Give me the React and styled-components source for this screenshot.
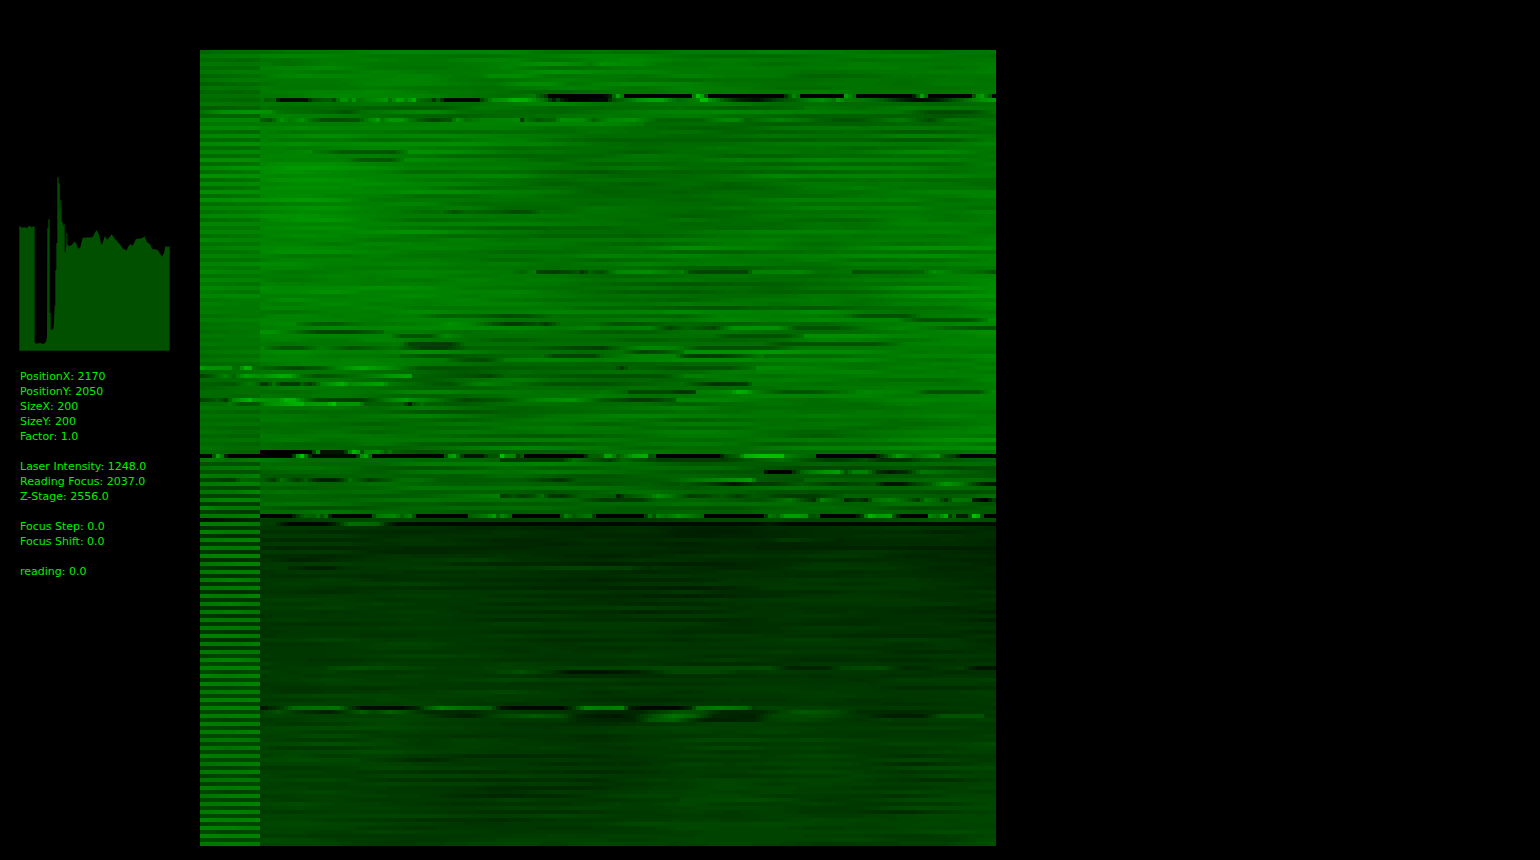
import React from "react";
import styled, { createGlobalStyle } from "styled-components";

const GlobalStyle = createGlobalStyle`
  body {
    margin: 0;
    background: #000;
    color: #00f000;
    font-family: "DejaVu Sans", sans-serif;
  }
`;

const Workspace = styled.main`
  display: grid;
  grid-template-columns: 180px minmax(0, 796px);
  align-items: start;
  padding: 50px 20px 14px;
`;

const Sidebar = styled.aside`
  padding-top: 127px;
`;

const Histogram = styled.svg`
  display: block;
  width: 151px;
  height: 174px;
  margin-left: -1px;
  fill: #005000;
`;

const Readouts = styled.div`
  display: flex;
  flex-direction: column;
  gap: 15px;
  margin-top: 18px;
`;

const Group = styled.ul`
  list-style: none;
  margin: 0;
  padding: 0;
`;

const Readout = styled.li`
  font-size: 11px;
  line-height: 15px;
  white-space: nowrap;
`;

const Scan = styled.svg`
  display: block;
  width: 100%;
  height: auto;
`;

const GROUPS = [
  [["PositionX", "2170"], ["PositionY", "2050"], ["SizeX", "200"], ["SizeY", "200"], ["Factor", "1.0"]],
  [["Laser Intensity", "1248.0"], ["Reading Focus", "2037.0"], ["Z-Stage", "2556.0"]],
  [["Focus Step", "0.0"], ["Focus Shift", "0.0"]],
  [["reading", "0.0"]],
];

const PROFILE =
  "58,182 66,188 74,187 80,190 88,182 95,187 102,184 104,184 104,532 108,536 120,534 130,537 138,531 141,515 142,188 145,188 145,163 149,163 149,443 152,445 152,495 160,493 162,470 164,424 166,420 166,316 169,314 169,235 172,233 172,37 176,37 176,54 179,56 180,178 181,106 184,106 185,170 188,172 189,187 191,178 194,178 194,262 197,262 197,248 199,246 199,205 202,205 202,235 206,244 215,240 224,230 229,236 234,250 240,250 248,218 278,217 284,204 290,195 296,206 304,238 307,238 314,214 322,224 335,208 345,222 358,236 370,252 380,256 386,242 392,238 398,242 408,222 426,220 434,214 440,230 450,238 456,252 472,254 480,266 487,275 492,264 497,242 503,246 509,244 509,557 58,557";

const SIZE = 199;
const BAND = 15;

// Background level by row, sampled at evenly spaced columns from left to right.
const FIELD = [
  [0, [118, 124, 126, 122, 126, 122, 118, 122, 124]],
  [10, [112, 122, 124, 120, 122, 120, 114, 118, 124]],
  [14, [116, 118, 118, 116, 116, 112, 110, 110, 114]],
  [20, [124, 128, 128, 122, 112, 106, 106, 112, 118]],
  [30, [130, 136, 130, 118, 102, 108, 108, 114, 116]],
  [40, [126, 138, 130, 112, 108, 106, 114, 122, 120]],
  [50, [128, 128, 122, 116, 112, 118, 118, 124, 128]],
  [60, [132, 128, 134, 122, 112, 104, 108, 120, 134]],
  [72, [116, 126, 122, 112, 114, 116, 126, 122, 132]],
  [84, [112, 124, 116, 110, 114, 120, 118, 118, 122]],
  [92, [116, 110, 108, 108, 114, 112, 108, 112, 128]],
  [100, [112, 108, 104, 104, 110, 110, 108, 114, 128]],
  [102, [104, 102, 102, 104, 102, 98, 92, 92, 90]],
  [116, [104, 98, 100, 98, 98, 94, 94, 92, 86]],
  [117, [66, 66, 60, 64, 70, 66, 62, 72, 70]],
  [119, [48, 46, 44, 42, 42, 38, 40, 44, 40]],
  [130, [52, 54, 52, 50, 44, 44, 50, 52, 42]],
  [145, [56, 56, 56, 52, 50, 50, 52, 48, 44]],
  [160, [58, 58, 60, 60, 54, 56, 56, 52, 56]],
  [172, [66, 68, 68, 56, 52, 60, 62, 60, 62]],
  [184, [62, 66, 58, 50, 52, 62, 60, 56, 64]],
  [198, [64, 66, 56, 58, 62, 72, 68, 64, 72]],
];

// Scan lines with strong reflections: row number, then column:level stops.
const TRACES = {
  3: "97:120 100:150 110:138 114:120",
  6: "70:124 72:142 80:145 86:118",
  8: "74:120 80:142 88:142 92:120",
  11: "84:100 86:60 87:0 100:0 102:30 103:100 104:180 105:120 106:0 122:0 123:120 124:225 125:170 126:90 127:0 145:0 146:50 147:90 148:140 149:110 150:0 160:0 161:170 162:140 163:110 164:0 177:0 178:30 179:90 180:180 181:110 182:0 192:0 193:80 194:150 195:170 196:120 197:90 198:0",
  12: "15:115 16:90 18:100 19:40 20:14 26:14 27:50 28:75 32:90 33:70 35:150 36:150 37:120 38:160 39:115 45:150 46:160 47:110 49:180 50:170 51:130 53:190 54:110 57:90 58:50 59:90 60:50 61:8 69:8 70:70 73:150 76:165 78:200 81:190 83:150 86:100 88:30 89:70 90:30 92:0 101:10 102:50 103:80 107:120 109:150 112:175 115:180 117:130 119:105 124:130 125:210 126:210 127:160 131:80 135:30 139:15 143:60 147:90 150:110 153:140 155:150 158:120 159:165 161:125 166:115 170:95 173:60 176:30 180:8 184:30 188:80 191:110 195:150 198:170",
  14: "15:110 30:105 50:90 60:90 70:120 90:100 120:110 135:90 150:105",
  15: "0:115 5:148 13:158 17:150 19:115 33:95 36:80 40:110 55:140 58:140 65:110 90:100 110:125 130:140 147:130 175:115 182:75 192:75 198:110",
  17: "15:95 17:80 20:150 22:125 25:150 27:115 30:80 34:75 39:85 41:120 44:175 45:120 47:160 50:160 52:120 55:90 58:65 62:85 64:150 66:110 70:130 79:140 80:60 81:115 84:85 88:100 90:150 95:145 98:100 102:140 108:150 114:100 125:100 131:140 134:140 136:100 145:130 160:80 163:80 175:125 182:75 187:120 198:110",
  18: "0:118 100:138 110:120",
  25: "28:125 35:90 48:85 51:125",
  27: "36:125 40:90 47:85 50:120",
  40: "60:110 63:80 66:100 74:90 78:75 82:80 85:110",
  55: "78:115 80:100 83:125 84:70 88:60 94:80 95:55 97:95 100:75 104:140 112:150 118:120 120:130 122:80 124:70 136:70 138:130 146:130 149:140 154:110 162:115 163:80 180:100 183:150 188:120 196:100 198:80",
  66: "55:120 60:95 68:100 76:75 81:80 88:110 120:100 130:130 160:120 165:80 176:80 180:120",
  67: "175:120 180:80 192:80 196:120",
  68: "24:120 28:95 33:90 40:115 58:130 62:150 67:135 76:60 79:60 84:80 86:60 90:110 98:110 104:80 115:95",
  69: "100:120 112:130 117:70 121:100 128:70 133:150 144:150 149:80 158:80 165:110 175:140 190:90 198:80",
  70: "15:150 18:150 22:120 29:70 38:70 45:100",
  71: "48:115 50:85 57:85 61:140 66:110 128:110 132:80 146:80 150:115",
  73: "50:115 52:70 62:60 66:110 140:110 145:80 168:80 175:120",
  74: "16:115 20:85 25:85 30:125 37:85 40:90 48:115 55:60 61:60 67:100 82:100 89:80 100:60 103:90 110:140 118:130 125:80 142:80 150:120",
  75: "105:115 110:70 115:80 120:110",
  76: "50:100 58:80 85:110 88:70 98:70 100:100 108:130 118:130 121:70 124:60 131:65 134:80 140:120",
  77: "35:135 60:120 66:80 71:75 75:110",
  79: "0:170 1:150 7:150 8:110 9:110 11:200 12:190 13:110 20:80 24:70 30:90 36:150 40:185 46:150 55:80 60:80 75:90 103:95 105:60 107:100 120:80 132:80 138:115",
  81: "0:65 2:85 6:130 8:100 11:170 15:145 20:190 22:180 25:110 29:80 33:90 44:130 47:160 52:175 53:100 67:80 72:65 76:100 100:80 115:80 120:115",
  83: "0:95 8:85 12:125 14:100 15:60 16:60 18:110 20:60 24:60 25:90 27:60 28:80 30:130 35:190 37:145 45:175 47:120 62:80 70:135 88:80 99:80 120:110 128:50 136:60 138:120",
  85: "100:120 106:100 107:70 117:70 120:50 123:60 124:125 132:140 134:190 136:180 138:130 146:80 152:80 160:110 166:140 178:125 182:80 194:80 198:145",
  87: "0:65 4:90 6:60 8:140 12:200 13:165 16:150 19:150 21:200 23:190 25:130 29:70 38:60 40:60 45:110 51:170 53:145 60:110 66:70 76:90 85:140 93:155 100:90 108:60 112:60 118:90",
  88: "7:120 10:80 14:90 16:140 23:190 25:195 26:160 31:170 33:220 34:155 39:160 41:90 50:100 51:70 52:30 53:80 55:110",
  100: "15:0 27:0 28:70 29:140 30:20 35:20 36:60 38:200 39:170 40:80 41:130 44:150 46:100 47:120",
  101: "0:0 2:0 3:80 4:180 5:120 6:40 7:0 22:0 23:60 24:160 25:220 26:120 27:50 28:8 38:8 39:60 40:150 41:180 42:110 43:0 60:0 61:80 62:160 63:180 64:110 65:60 66:25 70:25 72:80 74:80 75:220 76:150 78:130 79:60 80:90 81:0 95:0 97:90 100:100 101:180 102:180 104:90 105:110 108:180 111:190 112:80 113:90 114:0 129:0 131:70 134:100 136:190 140:220 145:210 146:130 149:110 153:100 154:0 168:0 169:40 171:80 174:170 178:110 184:160 185:100 186:80 188:60 190:0 198:0",
  102: "0:130 15:120 24:108 74:100 75:60 90:60 93:110 102:60 105:100 115:60 130:60 138:90 145:110 156:60 160:60 166:80 170:50 176:50 180:80 198:100",
  105: "120:90 140:80 141:20 142:0 147:0 148:50 150:100 155:150 159:170 161:80 163:130 166:130 168:80 169:50 172:25 176:45 180:120 184:110 198:80",
  107: "0:70 3:70 5:60 8:60 10:100 15:90 18:60 20:110 22:80 24:60 26:90 28:50 30:30 33:30 35:60 37:110 42:60 50:110 55:110 60:90 80:90 90:50 94:90 115:90 130:140 137:170 139:90 150:80",
  108: "120:90 128:60 133:20 138:60 143:60 150:90 158:60 168:80 171:20 175:20 178:60 182:90 186:160 190:120 195:40 198:20",
  111: "75:60 78:80 80:60 83:80 85:110 87:60 90:50 95:100 103:90 104:30 106:80 112:110 114:150 120:90 122:60 126:70 130:90 134:60 138:90 147:60 153:60 160:90",
  112: "95:90 100:60 110:60 114:100 125:100 140:80 147:120 153:50 155:130 157:110 160:90 161:40 164:60 166:40 168:110 172:130 176:100 179:60 181:120 184:100 186:50 188:120 192:110 193:30 196:0 198:60",
  116: "15:0 22:0 24:60 26:100 28:90 29:115 30:80 31:110 32:40 33:0 42:0 43:80 44:120 48:140 50:100 52:130 53:80 54:0 66:0 67:90 71:120 73:170 74:100 75:140 77:100 78:0 89:0 90:80 91:130 93:90 97:120 98:60 99:0 110:0 111:60 112:120 113:80 114:130 116:110 119:150 121:130 125:100 126:0 140:0 141:60 142:120 144:100 146:170 149:170 151:150 152:80 154:90 155:0 163:0 165:60 167:200 169:160 172:180 173:80 175:0 181:0 182:140 184:110 186:190 187:60 188:100 189:30 191:30 192:80 193:220 194:190 195:80 196:0 198:0",
  118: "15:60 18:60 20:30 22:5 31:8 33:30 35:70 37:110 44:100 46:50 49:12 60:8 138:12 142:28 147:8 198:12",
  122: "140:38 146:56 158:44",
  127: "17:50 22:36 28:36 34:46 54:56 70:62 80:48",
  129: "22:46 28:32 32:32 36:50 55:60 80:58 92:66 107:62 112:44",
  154: "30:60 34:75 40:78 60:60 130:70 142:75 147:35 156:35 160:65 170:75 176:40 190:60 194:20 198:20",
  155: "72:60 80:80 88:50 92:20 100:20 108:30 118:70 128:70 135:55",
  164: "15:18 17:35 20:60 23:105 34:115 37:60 40:15 50:10 54:40 56:80 60:130 64:110 72:95 75:20 78:10 90:5 92:40 94:80 96:135 100:120 105:130 107:30 110:8 119:8 122:40 124:110 130:125 136:105 138:60",
  165: "15:60 19:80 25:50 32:30 36:60 38:75 40:95 43:70 47:95 51:75 56:45 65:40 75:60 95:50 100:38 110:40 114:60 119:85 125:75 130:40 140:40 150:90 158:75 165:45 176:40 198:60",
  166: "56:60 62:40 67:30 72:60 83:90 90:75 94:40 97:30 104:24 108:40 113:80 118:115 123:95 128:40 138:32 143:70 155:75 166:50 172:30 180:30 185:80 195:80",
  167: "90:60 95:38 108:36 112:80 118:98 122:60 126:32 138:36 142:62 150:70 165:50 172:62",
  177: "40:66 50:50 56:38 66:56",
  187: "120:68 140:76 155:55",
};

const noise = (a, b) => {
  const n = Math.sin(a * 127.1 + b * 311.7) * 43758.5453;
  return (n - Math.floor(n)) * 2 - 1;
};

const mix = (a, b, t) => a + (b - a) * t;

const wave = (row, x, period) => {
  const k = Math.floor(x / period);
  const t = x / period - k;
  return mix(noise(row, k + period), noise(row, k + 1 + period), t * t * (3 - 2 * t));
};

const fieldAt = (row, col) => {
  const i = Math.max(0, FIELD.findIndex(([r]) => r > row) - 1);
  const index = row >= 198 ? FIELD.length - 2 : i;
  const [r0, a] = FIELD[index];
  const [r1, b] = FIELD[index + 1];
  const x = col / 24.75;
  const k = Math.min(7, Math.floor(x));
  return mix(mix(a[k], a[k + 1], x - k), mix(b[k], b[k + 1], x - k), (row - r0) / (r1 - r0));
};

const traces = Object.fromEntries(
  Object.entries(TRACES).map(([row, text]) => [
    row,
    text.split(" ").map((stop) => stop.split(":").map(Number)),
  ])
);

const traceAt = (row, col) => {
  const stops = traces[row];
  if (!stops || col < stops[0][0] || col > stops[stops.length - 1][0]) return null;
  const next = stops.findIndex(([c]) => c >= col);
  if (stops[next][0] === col) return stops[next][1];
  const [c0, v0] = stops[next - 1];
  const [c1, v1] = stops[next];
  return mix(v0, v1, (col - c0) / (c1 - c0));
};

// Highlights are compressed so that only the strongest echoes stand out.
const soften = (level) => (level > 120 ? 120 + (level - 120) * 0.75 : level);

const levelAt = (row, col) => {
  if (col < BAND && row > 101 && row !== 107) {
    const rise = Math.min(1, (row - 101) / 16);
    const bright = mix(118, 120, rise) + wave(row, col, 7) * 8 + wave(7, row, 16) * 8 + col / 3;
    const dark = mix(90, row < 150 ? 52 : 68, rise) + wave(row, col, 7) * 6;
    if (row === 117) return 12 + col * 2;
    return row % 2 === 0 ? bright : dark;
  }
  const trace = traceAt(row, col);
  if (trace !== null) return soften(trace);
  let level = fieldAt(row, col);
  if (col < BAND) {
    const comb = row < 14 ? 6 : row < 38 ? 15 : 8;
    return level - 6 + (row % 2 ? comb : -comb) * (row < 62 ? 1 : 0.5) + wave(row, col, 12) * 5;
  }
  const gain = row > 118 ? 0.6 : 1;
  const comb = Math.max(0, wave(Math.floor(row / 16) + 400, col, 30)) * 14;
  level += (wave(row, col, 26) * 11 + wave(row, col, 11) * 7) * gain;
  return level + (row % 2 ? comb : -comb) * gain;
};

const buildLayers = () => {
  const layers = new Map();
  const snap = (v) => Math.max(0, Math.round(v / 3) * 3);
  for (let row = 0; row < SIZE; row++) {
    let start = 0;
    let level = snap(levelAt(row, 0));
    for (let col = 1; col <= SIZE; col++) {
      const next = col < SIZE ? snap(levelAt(row, col)) : -1;
      if (next !== level) {
        const run = `M${start} ${row}h${col - start}v1H${start}z`;
        layers.set(level, (layers.get(level) || "") + run);
        start = col;
        level = next;
      }
    }
  }
  return [...layers];
};

const LAYERS = buildLayers();

function ScanImage() {
  return (
    <Scan viewBox={`0 0 ${SIZE} ${SIZE}`} shapeRendering="crispEdges" role="img" aria-label="Scan">
      {LAYERS.map(([level, d]) => (
        <path key={level} d={d} fill={`rgb(0, ${level}, 0)`} />
      ))}
    </Scan>
  );
}

export default function App() {
  return (
    <>
      <GlobalStyle />
      <Workspace>
        <Sidebar>
          <Histogram viewBox="57 36 453 522" role="img" aria-label="Signal profile">
            <polygon points={PROFILE} />
          </Histogram>
          <Readouts>
            {GROUPS.map((group) => (
              <Group key={group[0][0]}>
                {group.map(([label, value]) => (
                  <Readout key={label}>{`${label}: ${value}`}</Readout>
                ))}
              </Group>
            ))}
          </Readouts>
        </Sidebar>
        <ScanImage />
      </Workspace>
    </>
  );
}
